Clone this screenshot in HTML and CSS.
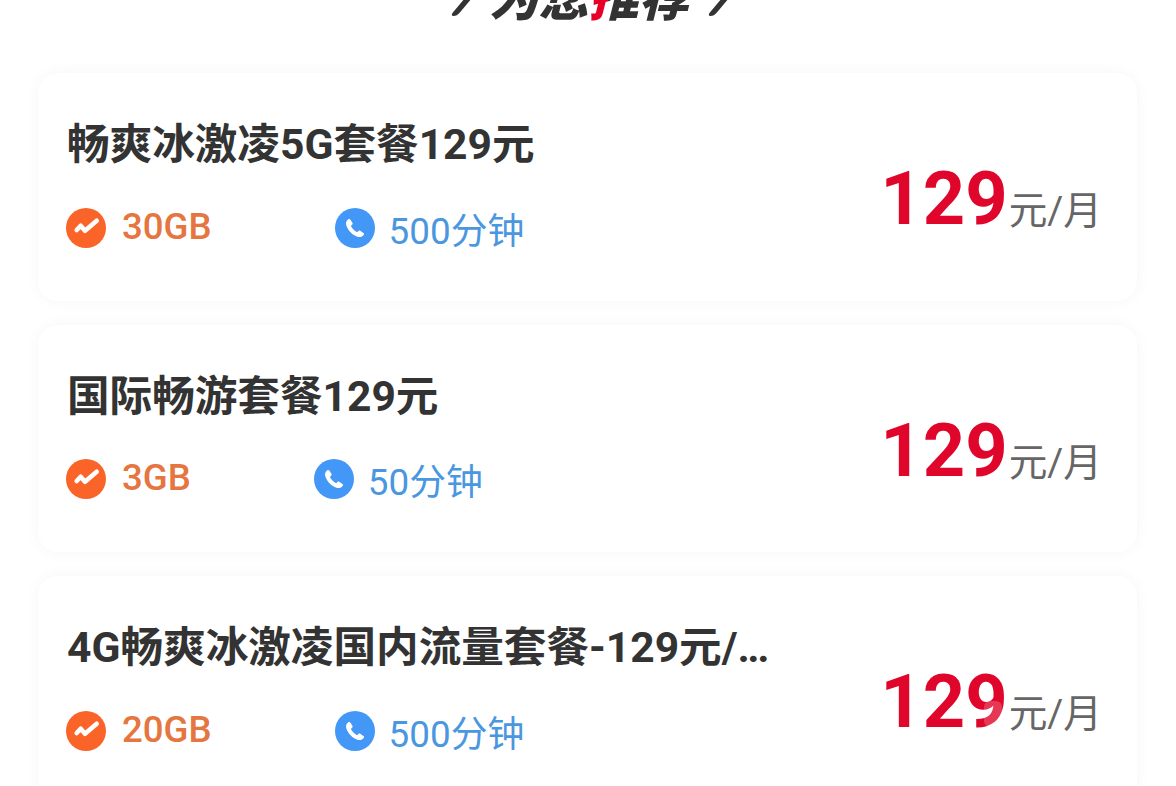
FILE: index.html
```html
<!DOCTYPE html>
<html lang="zh-CN">
<head>
    <meta charset="UTF-8">
    <title>为您推荐</title>
    <link rel="stylesheet" href="styles.css">
</head>
<body>
    <h2 class="section-title">
        <span class="slash"></span>
        <span>为您<i class="red">推</i>荐</span>
        <span class="slash slash-right"></span>
    </h2>

    <div class="card">
        <div class="info">
            <h3 class="name">畅爽冰激凌5G套餐129元</h3>
            <div class="specs">
                <div class="spec data">
                    <svg class="icon" viewBox="0 0 40 40"><circle cx="20" cy="20" r="20" fill="#fb6428"/><path d="M10.7 22 L14.7 17.7 L19 22.7 L30.7 12.7" fill="none" stroke="#fff" stroke-width="4.6" stroke-linecap="round" stroke-linejoin="round"/></svg>
                    <span>30GB</span>
                </div>
                <div class="spec call">
                    <svg class="icon" viewBox="0 0 40 40"><circle cx="20" cy="20" r="20" fill="#4297f7"/><path d="M13 11.5 C11 13 10.5 15.5 11.5 18 C13.5 23 17.5 27 22.5 28.8 C25 29.6 27.5 28.8 28.8 26.8 C29.3 26 29 25.3 28.4 24.9 L25.2 22.8 C24.5 22.4 23.9 22.5 23.4 23 L22.2 24.2 C19.5 23 17 20.5 15.9 18 L17.2 16.6 C17.7 16.1 17.8 15.4 17.4 14.8 L15.5 11.8 C14.9 11 13.9 10.9 13 11.5 Z" fill="#fff"/></svg>
                    <span>500分钟</span>
                </div>
            </div>
        </div>
        <div class="price"><strong>129</strong>元/月</div>
    </div>

    <div class="card">
        <div class="info">
            <h3 class="name">国际畅游套餐129元</h3>
            <div class="specs">
                <div class="spec data">
                    <svg class="icon" viewBox="0 0 40 40"><circle cx="20" cy="20" r="20" fill="#fb6428"/><path d="M10.7 22 L14.7 17.7 L19 22.7 L30.7 12.7" fill="none" stroke="#fff" stroke-width="4.6" stroke-linecap="round" stroke-linejoin="round"/></svg>
                    <span>3GB</span>
                </div>
                <div class="spec call">
                    <svg class="icon" viewBox="0 0 40 40"><circle cx="20" cy="20" r="20" fill="#4297f7"/><path d="M13 11.5 C11 13 10.5 15.5 11.5 18 C13.5 23 17.5 27 22.5 28.8 C25 29.6 27.5 28.8 28.8 26.8 C29.3 26 29 25.3 28.4 24.9 L25.2 22.8 C24.5 22.4 23.9 22.5 23.4 23 L22.2 24.2 C19.5 23 17 20.5 15.9 18 L17.2 16.6 C17.7 16.1 17.8 15.4 17.4 14.8 L15.5 11.8 C14.9 11 13.9 10.9 13 11.5 Z" fill="#fff"/></svg>
                    <span>50分钟</span>
                </div>
            </div>
        </div>
        <div class="price"><strong>129</strong>元/月</div>
    </div>

    <div class="card">
        <div class="info">
            <h3 class="name">4G畅爽冰激凌国内流量套餐-129元/<span class="dots">...</span></h3>
            <div class="specs">
                <div class="spec data">
                    <svg class="icon" viewBox="0 0 40 40"><circle cx="20" cy="20" r="20" fill="#fb6428"/><path d="M10.7 22 L14.7 17.7 L19 22.7 L30.7 12.7" fill="none" stroke="#fff" stroke-width="4.6" stroke-linecap="round" stroke-linejoin="round"/></svg>
                    <span>20GB</span>
                </div>
                <div class="spec call">
                    <svg class="icon" viewBox="0 0 40 40"><circle cx="20" cy="20" r="20" fill="#4297f7"/><path d="M13 11.5 C11 13 10.5 15.5 11.5 18 C13.5 23 17.5 27 22.5 28.8 C25 29.6 27.5 28.8 28.8 26.8 C29.3 26 29 25.3 28.4 24.9 L25.2 22.8 C24.5 22.4 23.9 22.5 23.4 23 L22.2 24.2 C19.5 23 17 20.5 15.9 18 L17.2 16.6 C17.7 16.1 17.8 15.4 17.4 14.8 L15.5 11.8 C14.9 11 13.9 10.9 13 11.5 Z" fill="#fff"/></svg>
                    <span>500分钟</span>
                </div>
            </div>
        </div>
        <div class="price"><strong>129</strong>元/月<span class="watermark"></span></div>
    </div>
</body>
</html>
```

FILE: styles.css
```css
html, body {
    height: 786px;
    overflow: hidden;
}
body {
    font-family: Roboto, "Noto Sans CJK SC", sans-serif;
    background-color: #fff;
    margin: 0;
    padding: 0 39px 0 38px;
}
.section-title {
    display: flex;
    justify-content: center;
    align-items: flex-end;
    gap: 22px;
    height: 48px;
    margin: -25px 0 50px;
    padding-left: 8px;
    font-size: 50px;
    line-height: 48px;
    font-weight: 900;
    font-style: italic;
    color: #333;
    white-space: nowrap;
}
.section-title .slash {
    width: 7px;
    height: 24px;
    margin-bottom: 7px;
    border-radius: 4px;
    background: #333;
    transform: skewX(-40deg);
}
.section-title .slash-right {
    margin-left: 6px;
}
.section-title .red {
    background: linear-gradient(90deg, #e60027 38%, #333 38%);
    -webkit-background-clip: text;
    background-clip: text;
    color: transparent;
}
.card {
    display: flex;
    justify-content: space-between;
    height: 227.5px;
    margin-bottom: 24px;
    padding: 0 35px 0 30px;
    border-radius: 20px;
    background: #fff;
    box-shadow: 0 0 16px rgba(0, 0, 0, 0.04);
    box-sizing: border-box;
}
.name {
    margin: 43px 0 0 -1px;
    font-size: 42.6px;
    line-height: 56px;
    font-weight: 700;
    color: #333;
    white-space: nowrap;
}
.dots {
    letter-spacing: -2.5px;
}
.specs {
    display: flex;
    margin-top: 34.5px;
    margin-left: -2px;
}
.spec {
    display: flex;
    align-items: center;
    gap: 16px;
    height: 42px;
}
.spec.data {
    margin-right: 123px;
    font-size: 36.6px;
    font-weight: 500;
    color: #e5763f;
}
.spec.data span {
    margin-bottom: 3px;
}
.spec.call {
    gap: 14px;
    font-size: 36.8px;
    color: #4a97e0;
}
.icon {
    width: 40px;
    height: 40px;
    flex-shrink: 0;
}
.price {
    position: relative;
    margin-top: 81px;
    font-size: 38.7px;
    line-height: 90px;
    height: 90px;
    color: #666;
    white-space: nowrap;
}
.price strong {
    font-size: 74px;
    font-weight: 700;
    color: #e0062b;
    margin-right: 1px;
}
.watermark {
    position: absolute;
    left: 104px;
    top: 44px;
    width: 18px;
    height: 26px;
    border-radius: 6px;
    background: rgba(255, 255, 255, 0.2);
}
```
